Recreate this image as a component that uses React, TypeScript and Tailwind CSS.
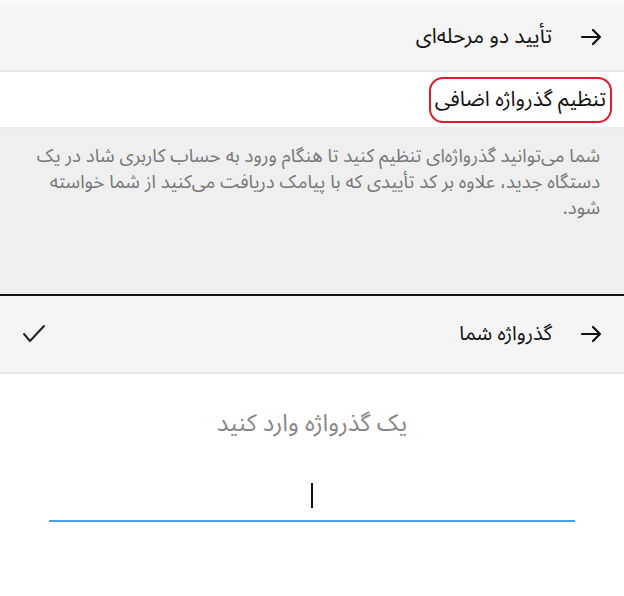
const font = { fontFamily: '"Noto Sans Arabic", "DejaVu Sans", "Noto Sans", sans-serif' };

function BackArrow() {
  return (
    <svg width="22" height="22" viewBox="0 0 22 22" fill="none" stroke="#111" strokeWidth="2.2" strokeLinecap="round" strokeLinejoin="round">
      <path d="M2 11h18M13 4l7 7-7 7" />
    </svg>
  );
}

function Check() {
  return (
    <svg width="24" height="20" viewBox="0 0 24 20" fill="none" stroke="#222" strokeWidth="2" strokeLinecap="round" strokeLinejoin="round">
      <path d="M2 10l6 7L22 2" />
    </svg>
  );
}

export default function App() {
  return (
    <div dir="rtl" className="w-[624px] h-[596px] bg-white overflow-hidden" style={font}>
      {/* page header */}
      <div className="h-[72px] bg-[#f5f5f5] border-t-[3px] border-t-[#fafafa] border-b-2 border-b-[#e8e8e8] flex items-center pr-[22px]">
        <BackArrow />
        <span className="mr-[28px] text-[21px] text-[#111]">تأیید دو مرحله‌ای</span>
      </div>

      <div className="h-[57px] bg-white flex items-center pr-[12px] border-b-2 border-b-[#ebebeb]">
        <div className="border-[2.5px] border-[#e31b2a] rounded-[14px] px-[4px] h-[46px] flex items-center">
          <span className="text-[21px] text-[#111]">تنظیم گذرواژه اضافی</span>
        </div>
      </div>

      <div className="h-[165px] bg-[#efefef] pr-[24px] pl-[24px] pt-[14px]">
        <p className="text-[18.6px] leading-[26px] text-[#777]">
          شما می‌توانید گذرواژه‌ای تنظیم کنید تا هنگام ورود به حساب کاربری شاد در یک دستگاه جدید، علاوه بر کد تأییدی که با پیامک دریافت می‌کنید از شما خواسته شود.
        </p>
      </div>

      <div className="h-[2px] bg-[#111]" />

      <div className="h-[78px] bg-[#f5f5f5] border-b-2 border-b-[#e8e8e8] flex items-center pr-[22px] pl-[22px]">
        <BackArrow />
        <span className="mr-[28px] text-[20px] text-[#111]">گذرواژه شما</span>
        <div className="mr-auto">
          <Check />
        </div>
      </div>

      <div className="flex flex-col items-center pt-[32px]">
        <span className="text-[24px] text-[#888]">یک گذرواژه وارد کنید</span>
        <div className="mt-[40px] w-[526px] h-[40px] border-b-2 border-b-[#4aa3e8] flex items-end justify-center pb-[12px]">
          <div className="w-[2px] h-[25px] bg-[#111]" />
        </div>
      </div>
    </div>
  );
}
